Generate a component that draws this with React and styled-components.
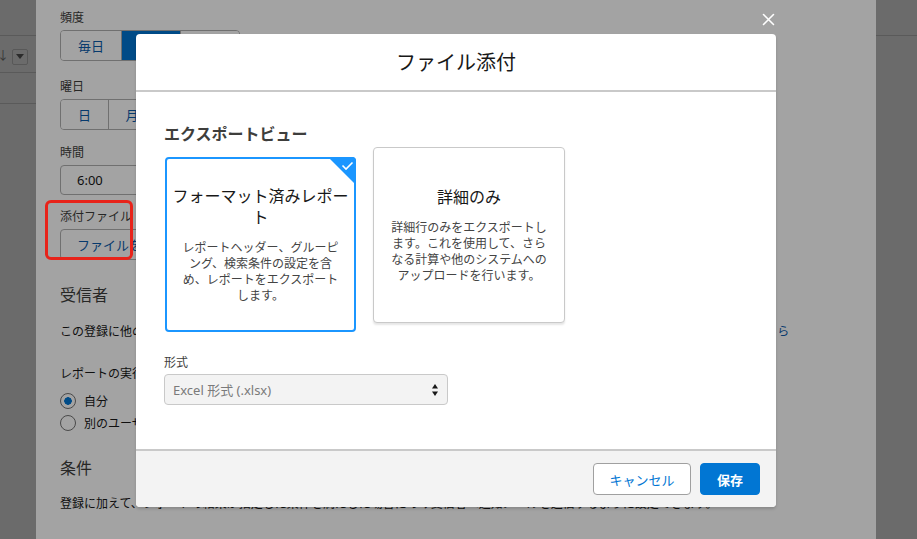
import React from 'react'
import styled, { createGlobalStyle } from 'styled-components';

const GlobalStyle = createGlobalStyle`
  html, body {
    margin: 0;
    padding: 0;
  }
  body {
    font-family: "Noto Sans", "Noto Sans CJK JP", sans-serif;
    color: #181818;
  }
  * { box-sizing: border-box; }
`

const FONT = `"Noto Sans", "Noto Sans CJK JP", sans-serif`

const App = () => {
  return (
    <Page>
      <GlobalStyle />
      <SideStrip>
        <StripTop />
        <StripBar>
          <span className='arrow'>↓</span>
          <DropBox>
            <svg width="8" height="5" viewBox="0 0 8 5"><polygon points="0,0 8,0 4,5" fill="#444" /></svg>
          </DropBox>
        </StripBar>
        <StripRow />
      </SideStrip>

      <BackModal>
        <Field $mt={9}>
          <Label>頻度</Label>
          <Segments>
            <Seg $w={60}>毎日</Seg>
            <Seg $w={59} $active>毎週</Seg>
            <Seg $w={59}>毎月</Seg>
          </Segments>
        </Field>
        <Field $mt={17}>
          <Label>曜日</Label>
          <Segments>
            {['日','月','火','水','木','金','土'].map(d => <Seg key={d} $w={47}>{d}</Seg>)}
          </Segments>
        </Field>
        <Field $mt={14}>
          <Label>時間</Label>
          <TimeInput>6:00</TimeInput>
        </Field>
        <Field $mt={13}>
          <Label>添付ファイル</Label>
          <AttachBtn>ファイルを添付</AttachBtn>
        </Field>
        <Heading $mt={23}>受信者</Heading>
        <Text $mt={16}>この登録に他のユーザーを追加すると、各ユーザーにレポートの結果がメールで定期的に送信されます。<a>受信者の詳細についてはこちら</a></Text>
        <Text $mt={24}>レポートの実行ユーザー: 受信者はこのユーザーと同じデータアクセス権でレポートを表示します</Text>
        <Radio $mt={8} $checked>自分</Radio>
        <Radio $mt={2}>別のユーザー</Radio>
        <Heading $mt={23}>条件</Heading>
        <Text $mt={15}>登録に加えて、レポートの結果が指定した条件を満たした場合にのみ受信者へ通知メールを送信するように設定できます。</Text>
      </BackModal>

      <SideStrip $right>
        <StripTop />
      </SideStrip>

      <Annotation />

      <Backdrop>
        <CloseBtn>
          <svg width="13" height="13" viewBox="0 0 13 13">
            <path d="M1.5 1.5 L11.5 11.5 M11.5 1.5 L1.5 11.5" stroke="#fff" strokeWidth="1.6" strokeLinecap="round" />
          </svg>
        </CloseBtn>
        <Modal>
          <ModalHeader>ファイル添付</ModalHeader>
          <ModalBody>
            <SectionTitle>エクスポートビュー</SectionTitle>
            <Cards>
              <Card $selected>
                <Corner>
                  <svg width="28" height="28" viewBox="0 0 28 28">
                    <polygon points="0,0 28,0 28,28" fill="#1b96ff" />
                    <path d="M14.5 8.5 L18 12 L24.5 5.5" stroke="#fff" strokeWidth="1.6" fill="none" />
                  </svg>
                </Corner>
                <CardTitle>フォーマット済みレポート</CardTitle>
                <CardDesc>レポートヘッダー、グルーピング、検索条件の設定を含め、レポートをエクスポートします。</CardDesc>
              </Card>
              <Card>
                <CardTitle>詳細のみ</CardTitle>
                <CardDesc>詳細行のみをエクスポートします。これを使用して、さらなる計算や他のシステムへのアップロードを行います。</CardDesc>
              </Card>
            </Cards>
            <FormatLabel>形式</FormatLabel>
            <Select>
              <span>Excel 形式 (.xlsx)</span>
              <svg width="8" height="14" viewBox="0 0 8 14">
                <polygon points="4,1 7,5.5 1,5.5" fill="#181818" />
                <polygon points="1,8.5 7,8.5 4,13" fill="#181818" />
              </svg>
            </Select>
          </ModalBody>
          <ModalFooter>
            <Button>キャンセル</Button>
            <Button $brand>保存</Button>
          </ModalFooter>
        </Modal>
      </Backdrop>
    </Page>
  )
}

export default App;

const Page = styled.div`
  position: relative;
  width: 917px;
  height: 539px;
  overflow: hidden;
  display: flex;
  background: #a8a8a8;
  font-family: ${FONT};
`

const SideStrip = styled.div`
  width: ${p => p.$right ? '41px' : '36px'};
  flex-shrink: 0;
  display: flex;
  flex-direction: column;
  background: #a8a8a8;
`

const StripTop = styled.div`
  height: 36px;
  border-bottom: 1px solid #8e8e8e;
`

const StripBar = styled.div`
  height: 37px;
  border-bottom: 1px solid #8e8e8e;
  display: flex;
  align-items: center;
  gap: 3px;
  .arrow {
    font-size: 12px;
    color: #555;
    margin-left: -3px;
    margin-top: 2px;
  }
`

const DropBox = styled.div`
  width: 16px;
  height: 16px;
  margin-top: 5px;
  border: 1px solid #8a8a8a;
  border-radius: 2px;
  display: flex;
  align-items: center;
  justify-content: center;
`

const StripRow = styled.div`
  height: 31px;
  border-bottom: 1px solid #8e8e8e;
`

const BackModal = styled.div`
  width: 840px;
  flex-shrink: 0;
  background: #fff;
  padding: 0 24px;
  display: flex;
  flex-direction: column;
  align-items: flex-start;
  overflow: hidden;
`

const Field = styled.div`
  margin-top: ${p => p.$mt}px;
  display: flex;
  flex-direction: column;
  align-items: flex-start;
`

const Label = styled.div`
  font-size: 12px;
  line-height: 18px;
  color: #3e3e3c;
  margin-bottom: 3px;
`

const Segments = styled.div`
  display: flex;
  height: 31px;
  border: 1px solid #b0b0b0;
  border-radius: 4px;
  overflow: hidden;
`

const Seg = styled.div`
  width: ${p => p.$w}px;
  display: flex;
  align-items: center;
  justify-content: center;
  font-size: 13px;
  color: ${p => p.$active ? '#fff' : '#0b5cab'};
  background: ${p => p.$active ? '#0176d3' : '#fff'};
  border-left: 1px solid #b0b0b0;
  &:first-child { border-left: none; }
`

const TimeInput = styled.div`
  width: 220px;
  height: 30px;
  border: 1px solid #b0b0b0;
  border-radius: 4px;
  padding-left: 16px;
  display: flex;
  align-items: center;
  font-size: 13px;
  color: #181818;
`

const AttachBtn = styled.div`
  height: 31px;
  padding: 0 16px;
  border: 1px solid #b0b0b0;
  border-radius: 4px;
  display: flex;
  align-items: center;
  font-size: 13px;
  color: #0b5cab;
`

const Heading = styled.div`
  margin-top: ${p => p.$mt}px;
  font-size: 16px;
  line-height: 24px;
  color: #3e3e3c;
`

const Text = styled.div`
  margin-top: ${p => p.$mt}px;
  font-size: 12px;
  line-height: 18px;
  color: #181818;
  white-space: nowrap;
  a { color: #0b5cab; }
`

const Radio = styled.div`
  margin-top: ${p => p.$mt}px;
  display: flex;
  align-items: center;
  gap: 8px;
  height: 20px;
  font-size: 12px;
  color: #181818;
  &::before {
    content: '';
    width: 14px;
    height: 14px;
    border-radius: 50%;
    border: 1px solid #747474;
    background: ${p => p.$checked ? 'radial-gradient(circle, #0176d3 0 3.5px, #fff 4px)' : '#fff'};
  }
`

const Annotation = styled.div`
  position: absolute;
  left: 45px;
  top: 200px;
  width: 88px;
  height: 60px;
  border: 3px solid #e8231a;
  border-radius: 6px;
  z-index: 2;
`

const Backdrop = styled.div`
  position: absolute;
  inset: 0;
  background: rgba(0, 0, 0, 0.36);
  z-index: 1;
`

const CloseBtn = styled.div`
  position: absolute;
  left: 762px;
  top: 13px;
  width: 13px;
  height: 13px;
  display: flex;
`

const Modal = styled.div`
  position: absolute;
  left: 136px;
  top: 34px;
  width: 640px;
  height: 473px;
  background: #fff;
  border-radius: 4px;
  box-shadow: 0 2px 3px rgba(0,0,0,0.16);
  display: flex;
  flex-direction: column;
  overflow: hidden;
`

const ModalHeader = styled.div`
  height: 58px;
  border-bottom: 2px solid #c9c9c9;
  display: flex;
  align-items: center;
  justify-content: center;
  font-size: 20px;
  color: #181818;
  padding-bottom: 2px;
`

const ModalBody = styled.div`
  flex: 1;
  padding: 30px 28px 0;
  display: flex;
  flex-direction: column;
  align-items: flex-start;
`

const SectionTitle = styled.div`
  font-size: 16px;
  font-weight: 700;
  line-height: 22px;
  color: #3e3e3c;
  margin-top: 1px;
`

const Cards = styled.div`
  margin-top: 2px;
  display: flex;
  align-items: flex-start;
  gap: 17px;
  padding-left: 1px;
`

const Card = styled.div`
  position: relative;
  width: ${p => p.$selected ? '191px' : '192px'};
  height: ${p => p.$selected ? '175px' : '176px'};
  margin-top: ${p => p.$selected ? '10px' : '0'};
  border: ${p => p.$selected ? '2px solid #1b96ff' : '1px solid #c9c9c9'};
  border-radius: 4px;
  box-shadow: ${p => p.$selected ? 'none' : '0 2px 2px rgba(0,0,0,0.1)'};
  background: #fff;
  display: flex;
  flex-direction: column;
  align-items: center;
  justify-content: center;
  text-align: center;
`

const Corner = styled.div`
  position: absolute;
  top: -2px;
  right: -2px;
  width: 28px;
  height: 28px;
  border-top-right-radius: 4px;
  overflow: hidden;
  display: flex;
`

const CardTitle = styled.div`
  font-size: 16px;
  line-height: 21px;
  color: #181818;
  padding: 0 3px;
`

const CardDesc = styled.div`
  margin-top: 12px;
  width: 164px;
  font-size: 12px;
  line-height: 16px;
  color: #444;
`

const FormatLabel = styled.div`
  margin-top: 22px;
  font-size: 12px;
  line-height: 18px;
  color: #3e3e3c;
`

const Select = styled.div`
  margin-top: 2px;
  width: 284px;
  height: 31px;
  background: #f3f3f3;
  border: 1px solid #c9c9c9;
  border-radius: 4px;
  display: flex;
  align-items: center;
  justify-content: space-between;
  padding: 0 8px 0 8px;
  font-size: 13px;
  color: #7a7a7a;
`

const ModalFooter = styled.div`
  height: 58px;
  border-top: 2px solid #c9c9c9;
  background: #f3f3f3;
  display: flex;
  align-items: center;
  justify-content: flex-end;
  gap: 9px;
  padding: 0 16px 0 0;
`

const Button = styled.div`
  height: 32px;
  padding: 0 ${p => p.$brand ? '16px' : '15px'};
  min-width: ${p => p.$brand ? '60px' : '98px'};
  border: 1px solid ${p => p.$brand ? '#0176d3' : '#a0a0a0'};
  border-radius: 4px;
  background: ${p => p.$brand ? '#0176d3' : '#fff'};
  color: ${p => p.$brand ? '#fff' : '#0176d3'};
  font-size: 13px;
  display: flex;
  align-items: center;
  justify-content: center;
  font-weight: ${p => p.$brand ? 700 : 400};
`
